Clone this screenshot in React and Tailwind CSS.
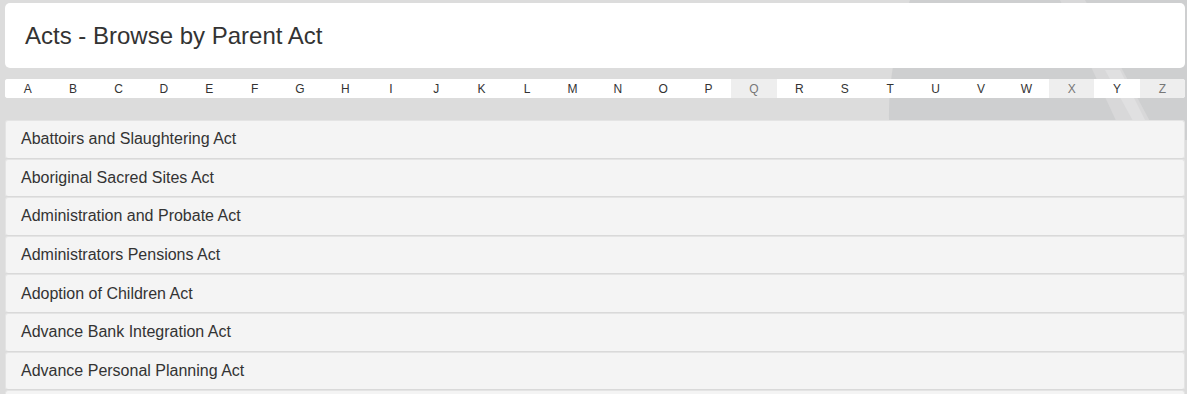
import React from "react";

const letters = "ABCDEFGHIJKLMNOPQRSTUVWXYZ".split("");
const disabled = ["Q", "X", "Z"];

const acts = [
  "Abattoirs and Slaughtering Act",
  "Aboriginal Sacred Sites Act",
  "Administration and Probate Act",
  "Administrators Pensions Act",
  "Adoption of Children Act",
  "Advance Bank Integration Act",
  "Advance Personal Planning Act",
];

const Backdrop = () => (
  <svg
    className="absolute inset-0 w-full h-full pointer-events-none"
    viewBox="0 0 1187 394"
    preserveAspectRatio="none"
  >
    {/* faint swirl behind the header */}
    <path d="M910 0 C893 50 886 95 890 140 L1187 140 L1187 0 Z" fill="#cecfd0" />
    <path d="M1060 0 L1085 0 L1160 140 L1125 140 Z" fill="#d8d8d9" />
    <path d="M1105 70 L1120 70 L1150 130 L1138 130 Z" fill="#e0e0e1" />
  </svg>
);

const App = () => {
  return (
    <div
      className="relative h-[394px] bg-[#dcdcdc] overflow-hidden"
      style={{ fontFamily: '"Liberation Sans", Arial, sans-serif' }}
    >
      <Backdrop />
      <div className="relative pl-[5px] pt-[3px] pr-[2px]">
        {/* Title */}
        <div className="bg-white rounded-[5px] h-[65px] flex items-center pl-[20px]">
          <h1 className="text-[24px] text-[#333] font-normal leading-none">
            Acts - Browse by Parent Act
          </h1>
        </div>

        {/* Letters */}
        <div className="mt-[11px] flex rounded-[3px] overflow-hidden bg-white h-[19px]">
          {letters.map((l) => (
            <div
              key={l}
              className={
                disabled.includes(l)
                  ? "flex-1 flex items-center justify-center text-[12px] text-[#777] bg-[#eeeeee]"
                  : "flex-1 flex items-center justify-center text-[12px] text-[#333] bg-white"
              }
            >
              {l}
            </div>
          ))}
        </div>

        {/* Act list */}
        <div className="mt-[22px]">
          {acts.map((a) => (
            <div
              key={a}
              className="h-[38.6px] flex items-center pl-[15px] bg-[#f4f4f4] border border-[#e4e4e4] border-b-[#d9d9d9] rounded-[3px] text-[16px] text-[#333]"
            >
              {a}
            </div>
          ))}
          <div className="h-[10px] bg-[#f4f4f4] border border-[#e4e4e4] rounded-t-[3px]" />
        </div>
      </div>
    </div>
  );
};

export default App;
